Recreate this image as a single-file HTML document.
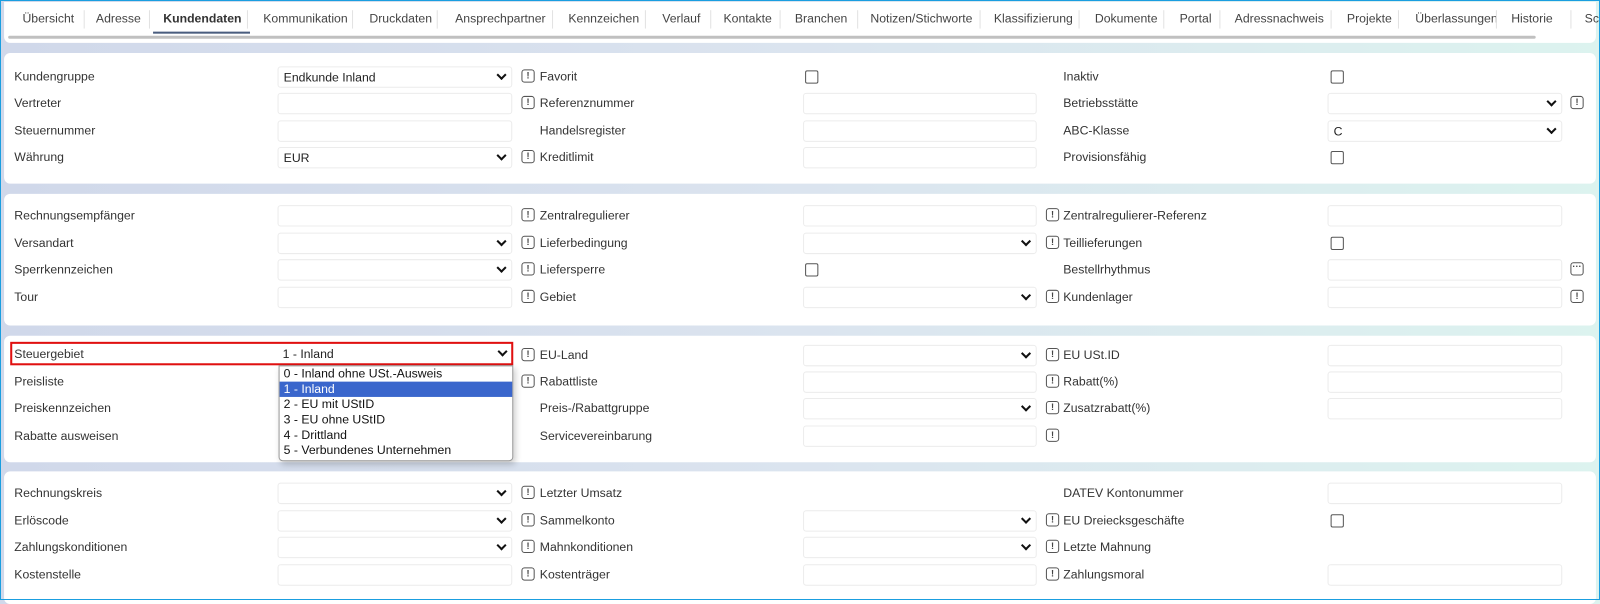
<!DOCTYPE html>
<html><head><meta charset="utf-8"><style>
*{box-sizing:border-box;margin:0;padding:0}
body{width:1600px;height:600px;overflow:hidden;font-family:"Liberation Sans",sans-serif;font-size:12px;color:#333;position:relative;background:linear-gradient(90deg,#d0d8ea 0%,#dbe4ef 50%,#dcf3ef 100%)}
.frame{position:absolute;left:0;top:0;width:1600px;height:600px;border:1px solid #1a9ee0;z-index:50;pointer-events:none}
.wrap{position:absolute;left:0;top:0;width:1568px;height:588px;transform:scale(1.0204);transform-origin:0 0}
.tabs{position:absolute;left:4px;top:2px;width:1560px;height:40px;background:#fff;border-radius:0 0 6px 6px}
.t{position:absolute;top:9px;font-size:12px;color:#444;white-space:nowrap}
.s{position:absolute;top:8px;width:1px;height:18px;background:#e2e2e2}
.ul{position:absolute;left:146px;top:29px;width:95px;height:2px;background:#4a5d7e}
.sb{position:absolute;left:8px;top:35px;width:1497px;height:3px;background:#c0c0c0;border-radius:2px}
.p{position:absolute;left:4px;width:1560px;background:#fff;border-radius:6px}
.l{position:absolute;white-space:nowrap;font-size:12px;color:#333}
.i{position:absolute;width:230px;height:21px;border:1px solid #ececec;border-radius:3px;background:#fff;font-size:12px;padding:3px 0 0 5px;color:#222}
.sel::after{content:"";position:absolute;right:6px;top:4px;width:5px;height:5px;border-right:2px solid #111;border-bottom:2px solid #111;transform:rotate(45deg)}
.w{position:absolute;width:13px;height:13px;border:1.3px solid #555;border-radius:3px;font-size:9px;font-weight:bold;text-align:center;line-height:10px;color:#444}
.c{position:absolute;width:13px;height:13px;border:1px solid #555;border-radius:2px;background:#fff}
.dd{position:absolute;left:273px;top:358px;width:230px;height:94px;background:#fff;border:1px solid #999;border-radius:0 0 4px 4px;z-index:10;box-shadow:2px 3px 6px rgba(0,0,0,.2)}
.dd div{height:15px;line-height:15px;padding-left:4px;font-size:12px;color:#111}
.dd .on{background:#3a66cc;color:#fff}
.red{position:absolute;left:10px;top:335px;width:493px;height:23px;border:2px solid #e01010;z-index:5}
</style></head><body>
<div class="frame"></div>
<div class="wrap">
<div class="tabs">
<span class="t" style="left:18px">Übersicht</span><span class="s" style="left:78px"></span>
<span class="t" style="left:90px">Adresse</span><span class="s" style="left:142px"></span>
<span class="t" style="left:156px;font-weight:bold;color:#333">Kundendaten</span><span class="s" style="left:238px"></span>
<span class="t" style="left:254px">Kommunikation</span><span class="s" style="left:341px"></span>
<span class="t" style="left:358px">Druckdaten</span><span class="s" style="left:424px"></span>
<span class="t" style="left:442px">Ansprechpartner</span><span class="s" style="left:537px"></span>
<span class="t" style="left:553px">Kennzeichen</span><span class="s" style="left:628px"></span>
<span class="t" style="left:645px">Verlauf</span><span class="s" style="left:692px"></span>
<span class="t" style="left:705px">Kontakte</span><span class="s" style="left:760px"></span>
<span class="t" style="left:775px">Branchen</span><span class="s" style="left:836px"></span>
<span class="t" style="left:849px">Notizen/Stichworte</span><span class="s" style="left:956px"></span>
<span class="t" style="left:970px">Klassifizierung</span><span class="s" style="left:1053px"></span>
<span class="t" style="left:1069px">Dokumente</span><span class="s" style="left:1136px"></span>
<span class="t" style="left:1152px">Portal</span><span class="s" style="left:1191px"></span>
<span class="t" style="left:1206px">Adressnachweis</span><span class="s" style="left:1300px"></span>
<span class="t" style="left:1316px">Projekte</span><span class="s" style="left:1366px"></span>
<span class="t" style="left:1383px">Überlassungen</span><span class="s" style="left:1462px"></span>
<span class="t" style="left:1477px">Historie</span><span class="s" style="left:1535px"></span>
<span class="t" style="left:1549px">Sc</span>
<div class="ul"></div>
</div>
<div class="sb"></div>

<div class="p" style="top:52px;height:128px"></div>
<div class="p" style="top:190px;height:129px"></div>
<div class="p" style="top:329px;height:124px"></div>
<div class="p" style="top:462px;height:130px"></div>

<span class="l" style="left:14px;top:68px">Kundengruppe</span>
<div class="i sel" style="left:272px;top:65px">Endkunde Inland</div>
<div class="w" style="left:511px;top:68px">!</div>
<span class="l" style="left:529px;top:68px">Favorit</span>
<div class="c" style="left:789px;top:69px"></div>
<span class="l" style="left:1042px;top:68px">Inaktiv</span>
<div class="c" style="left:1304px;top:69px"></div>

<span class="l" style="left:14px;top:94px">Vertreter</span>
<div class="i" style="left:272px;top:91px"></div>
<div class="w" style="left:511px;top:94px">!</div>
<span class="l" style="left:529px;top:94px">Referenznummer</span>
<div class="i" style="left:787px;top:91px;width:229px"></div>
<span class="l" style="left:1042px;top:94px">Betriebsstätte</span>
<div class="i sel" style="left:1301px;top:91px"></div>
<div class="w" style="left:1539px;top:94px">!</div>

<span class="l" style="left:14px;top:121px">Steuernummer</span>
<div class="i" style="left:272px;top:118px"></div>
<span class="l" style="left:529px;top:121px">Handelsregister</span>
<div class="i" style="left:787px;top:118px;width:229px"></div>
<span class="l" style="left:1042px;top:121px">ABC-Klasse</span>
<div class="i sel" style="left:1301px;top:118px">C</div>

<span class="l" style="left:14px;top:147px">Währung</span>
<div class="i sel" style="left:272px;top:144px">EUR</div>
<div class="w" style="left:511px;top:147px">!</div>
<span class="l" style="left:529px;top:147px">Kreditlimit</span>
<div class="i" style="left:787px;top:144px;width:229px"></div>
<span class="l" style="left:1042px;top:147px">Provisionsfähig</span>
<div class="c" style="left:1304px;top:148px"></div>

<span class="l" style="left:14px;top:204px">Rechnungsempfänger</span>
<div class="i" style="left:272px;top:201px"></div>
<div class="w" style="left:511px;top:204px">!</div>
<span class="l" style="left:529px;top:204px">Zentralregulierer</span>
<div class="i" style="left:787px;top:201px;width:229px"></div>
<div class="w" style="left:1025px;top:204px">!</div>
<span class="l" style="left:1042px;top:204px">Zentralregulierer-Referenz</span>
<div class="i" style="left:1301px;top:201px"></div>

<span class="l" style="left:14px;top:231px">Versandart</span>
<div class="i sel" style="left:272px;top:228px"></div>
<div class="w" style="left:511px;top:231px">!</div>
<span class="l" style="left:529px;top:231px">Lieferbedingung</span>
<div class="i sel" style="left:787px;top:228px;width:229px"></div>
<div class="w" style="left:1025px;top:231px">!</div>
<span class="l" style="left:1042px;top:231px">Teillieferungen</span>
<div class="c" style="left:1304px;top:232px"></div>

<span class="l" style="left:14px;top:257px">Sperrkennzeichen</span>
<div class="i sel" style="left:272px;top:254px"></div>
<div class="w" style="left:511px;top:257px">!</div>
<span class="l" style="left:529px;top:257px">Liefersperre</span>
<div class="c" style="left:789px;top:258px"></div>
<span class="l" style="left:1042px;top:257px">Bestellrhythmus</span>
<div class="i" style="left:1301px;top:254px"></div>
<div class="w" style="left:1539px;top:257px;line-height:7px">···</div>

<span class="l" style="left:14px;top:284px">Tour</span>
<div class="i" style="left:272px;top:281px"></div>
<div class="w" style="left:511px;top:284px">!</div>
<span class="l" style="left:529px;top:284px">Gebiet</span>
<div class="i sel" style="left:787px;top:281px;width:229px"></div>
<div class="w" style="left:1025px;top:284px">!</div>
<span class="l" style="left:1042px;top:284px">Kundenlager</span>
<div class="i" style="left:1301px;top:281px"></div>
<div class="w" style="left:1539px;top:284px">!</div>

<div class="red"></div>
<span class="l" style="left:14px;top:340px">Steuergebiet</span>
<div class="i sel" style="left:272px;top:337px;border:none">1 - Inland</div>
<div class="w" style="left:511px;top:341px">!</div>
<span class="l" style="left:529px;top:341px">EU-Land</span>
<div class="i sel" style="left:787px;top:338px;width:229px"></div>
<div class="w" style="left:1025px;top:341px">!</div>
<span class="l" style="left:1042px;top:341px">EU USt.ID</span>
<div class="i" style="left:1301px;top:338px"></div>

<span class="l" style="left:14px;top:367px">Preisliste</span>
<div class="w" style="left:511px;top:367px">!</div>
<span class="l" style="left:529px;top:367px">Rabattliste</span>
<div class="i" style="left:787px;top:364px;width:229px"></div>
<div class="w" style="left:1025px;top:367px">!</div>
<span class="l" style="left:1042px;top:367px">Rabatt(%)</span>
<div class="i" style="left:1301px;top:364px"></div>

<span class="l" style="left:14px;top:393px">Preiskennzeichen</span>
<span class="l" style="left:529px;top:393px">Preis-/Rabattgruppe</span>
<div class="i sel" style="left:787px;top:390px;width:229px"></div>
<div class="w" style="left:1025px;top:393px">!</div>
<span class="l" style="left:1042px;top:393px">Zusatzrabatt(%)</span>
<div class="i" style="left:1301px;top:390px"></div>

<span class="l" style="left:14px;top:420px">Rabatte ausweisen</span>
<span class="l" style="left:529px;top:420px">Servicevereinbarung</span>
<div class="i" style="left:787px;top:417px;width:229px"></div>
<div class="w" style="left:1025px;top:420px">!</div>

<div class="dd">
<div>0 - Inland ohne USt.-Ausweis</div>
<div class="on">1 - Inland</div>
<div>2 - EU mit UStID</div>
<div>3 - EU ohne UStID</div>
<div>4 - Drittland</div>
<div>5 - Verbundenes Unternehmen</div>
</div>

<span class="l" style="left:14px;top:476px">Rechnungskreis</span>
<div class="i sel" style="left:272px;top:473px"></div>
<div class="w" style="left:511px;top:476px">!</div>
<span class="l" style="left:529px;top:476px">Letzter Umsatz</span>
<span class="l" style="left:1042px;top:476px">DATEV Kontonummer</span>
<div class="i" style="left:1301px;top:473px"></div>

<span class="l" style="left:14px;top:503px">Erlöscode</span>
<div class="i sel" style="left:272px;top:500px"></div>
<div class="w" style="left:511px;top:503px">!</div>
<span class="l" style="left:529px;top:503px">Sammelkonto</span>
<div class="i sel" style="left:787px;top:500px;width:229px"></div>
<div class="w" style="left:1025px;top:503px">!</div>
<span class="l" style="left:1042px;top:503px">EU Dreiecksgeschäfte</span>
<div class="c" style="left:1304px;top:504px"></div>

<span class="l" style="left:14px;top:529px">Zahlungskonditionen</span>
<div class="i sel" style="left:272px;top:526px"></div>
<div class="w" style="left:511px;top:529px">!</div>
<span class="l" style="left:529px;top:529px">Mahnkonditionen</span>
<div class="i sel" style="left:787px;top:526px;width:229px"></div>
<div class="w" style="left:1025px;top:529px">!</div>
<span class="l" style="left:1042px;top:529px">Letzte Mahnung</span>

<span class="l" style="left:14px;top:556px">Kostenstelle</span>
<div class="i" style="left:272px;top:553px"></div>
<div class="w" style="left:511px;top:556px">!</div>
<span class="l" style="left:529px;top:556px">Kostenträger</span>
<div class="i" style="left:787px;top:553px;width:229px"></div>
<div class="w" style="left:1025px;top:556px">!</div>
<span class="l" style="left:1042px;top:556px">Zahlungsmoral</span>
<div class="i" style="left:1301px;top:553px"></div>
</div>
</body></html>
